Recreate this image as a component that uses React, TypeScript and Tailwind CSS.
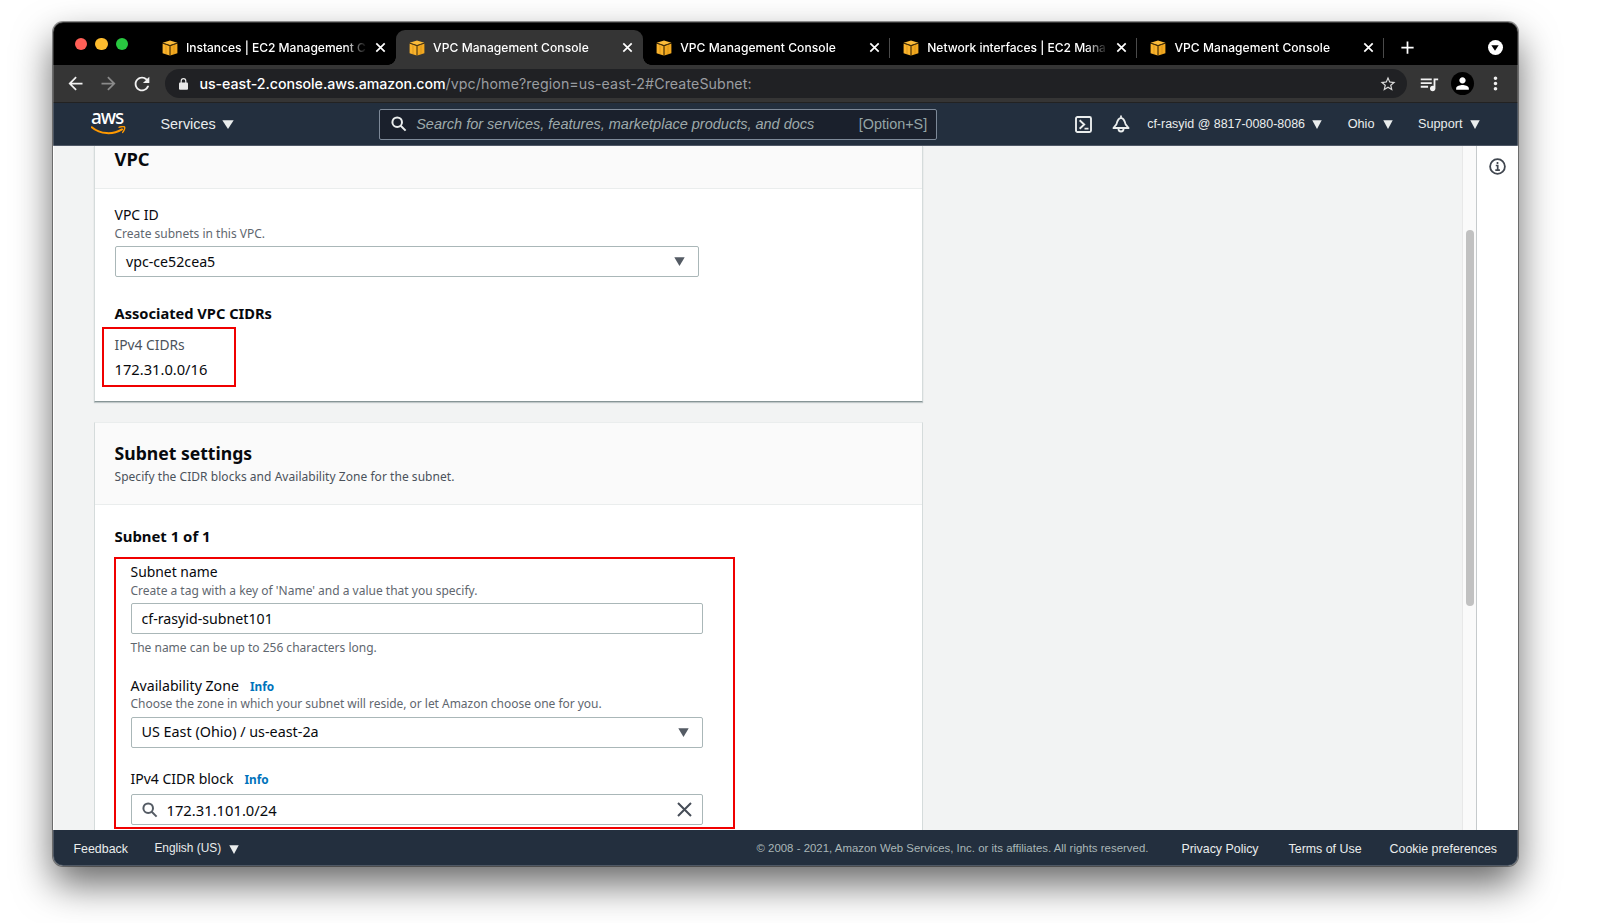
import React from "react";
import {
  MdAdd,
  MdArrowBack,
  MdArrowForward,
  MdMoreVert,
  MdPerson,
  MdQueueMusic,
  MdRefresh,
  MdStarBorder,
} from "react-icons/md";

const tabs = [
  { title: "Instances | EC2 Management C", spacing: "tracking-[-0.03px]" },
  { title: "VPC Management Console", active: true, spacing: "tracking-[0.06px]" },
  { title: "VPC Management Console", divider: true, spacing: "tracking-[0.06px]" },
  { title: "Network interfaces | EC2 Mana", divider: true, spacing: "tracking-[-0.03px]" },
  { title: "VPC Management Console", divider: true, spacing: "tracking-[0.06px]" },
];

function Cube() {
  return (
    <svg width="16" height="16" viewBox="0 0 16 16" className="shrink-0">
      <path d="M0.6 2.7 8 0.4l7.4 2.3L8 5.200z" fill="#fbbb3a" />
      <path d="M0.6 3.500 7.700 5.900v9.700L0.600 13.200z" fill="#fab32b" />
      <path d="M8.300 5.900l7.100-2.400v9.700L8.300 15.600z" fill="#f2a81f" />
      <path d="M0.600 3.100 8 5.500l7.400-2.400" stroke="#3d2a08" strokeWidth="0.8" fill="none" />
      <path d="M8 5.500v10.100" stroke="#6b4708" strokeWidth="0.9" fill="none" />
      <path d="M4 4.600v9.600M12 4.600v9.600" stroke="#c98a1a" strokeWidth="0.6" />
    </svg>
  );
}

function Caret({ className = "", w = 11 }: { className?: string; w?: number }) {
  return (
    <svg width={w} height="9" viewBox="0 0 11 9" preserveAspectRatio="none" className={"shrink-0 " + className}>
      <path d="M0.3 0.3h10.4L5.5 8.9z" fill="currentColor" />
    </svg>
  );
}

function Magnifier({ className = "" }: { className?: string }) {
  return (
    <svg width="16" height="16" viewBox="0 0 16 16" fill="none" stroke="currentColor" strokeWidth="2" className={"shrink-0 " + className}>
      <circle cx="6.2" cy="6.2" r="4.800" />
      <path d="M9.700 9.700l4.900 4.900" />
    </svg>
  );
}

function TabStrip() {
  return (
    <div className="flex h-[43px] bg-black">
      <div className="flex w-[96px] items-center gap-2 pt-[1px] pl-[21.5px]">
        <span className="size-[12.6px] rounded-full bg-[#ff5f57]" />
        <span className="size-[12.6px] rounded-full bg-[#febc2e]" />
        <span className="size-[12.6px] rounded-full bg-[#28c840]" />
      </div>
      {tabs.map((t, i) => (
        <div
          key={i}
          className={
            "relative mt-2 flex h-[35px] w-[247.1px] items-center pl-[13px] " +
            (t.active ? "rounded-t-[9px] bg-[#353535]" : "")
          }
        >
          {t.active && (
            <>
              <span className="absolute bottom-0 -left-2 size-2 bg-[radial-gradient(circle_at_0_0,#000_7.5px,#353535_8px)]" />
              <span className="absolute -right-2 bottom-0 size-2 bg-[radial-gradient(circle_at_100%_0,#000_7.5px,#353535_8px)]" />
            </>
          )}
          <Cube />
          <span
            className={
              "ml-2 w-[185px] text-[12.05px] leading-[18px] font-medium whitespace-nowrap text-white [mask-image:linear-gradient(to_right,#000_159px,transparent_181px)] " +
              t.spacing
            }
          >
            {t.title}
          </span>
          <svg width="11" height="11" viewBox="0 0 11 11" className="ml-[4px] shrink-0" stroke="#fff" strokeWidth="1.700">
            <path d="M1.300 1.300l8.400 8.400M9.700 1.300L1.300 9.700" />
          </svg>
          {t.divider && <span className="absolute top-2 right-0 h-5 w-px bg-[#4a4a4a]" />}
        </div>
      ))}
      <MdAdd className="mt-[15px] ml-[12.500px] size-[21px] text-white" />
      <span className="mt-[18px] ml-[70px] flex size-[15px] items-center justify-center rounded-full bg-white">
        <svg width="8" height="6" viewBox="0 0 8 6">
          <path d="M0.3 0.3h7.400L4 5.700z" fill="#000" />
        </svg>
      </span>
    </div>
  );
}

function Toolbar() {
  return (
    <div className="flex h-[38px] items-center border-b border-[#222] bg-[#353535] pl-3">
      <MdArrowBack className="size-[21px] text-[#f1f1f1]" />
      <MdArrowForward className="ml-3 size-[21px] text-[#8a8a8a]" />
      <MdRefresh className="ml-3 size-[22px] text-[#f1f1f1]" />
      <div className="ml-3 flex h-[29px] w-[1242px] items-center rounded-full bg-[#202124] pl-[14px] text-[14.2px] whitespace-nowrap">
        <svg width="9" height="12" viewBox="0 0 9 12">
          <rect x="0" y="4.500" width="9" height="7.300" rx="1" fill="#e8e8e8" />
          <path d="M2.200 5V3a2.300 2.300 0 014.600 0v2" fill="none" stroke="#e8e8e8" strokeWidth="1.200" />
        </svg>
        <span className="ml-[11.500px] font-medium tracking-[-0.04px] text-white">us-east-2.console.aws.amazon.com</span>
        <span className="tracking-[0.1px] text-[#9a9da1]">/vpc/home?region=us-east-2#CreateSubnet:</span>
        <MdStarBorder className="mr-[10px] ml-auto size-[18px] text-[#dadada]" />
      </div>
      <MdQueueMusic className="ml-[11px] size-[22px] text-[#f1f1f1]" />
      <span className="ml-[11px] flex size-[23px] items-center justify-center rounded-full bg-black">
        <MdPerson className="size-[19px] text-white" />
      </span>
      <MdMoreVert className="ml-[11px] size-[21px] text-[#f1f1f1]" />
    </div>
  );
}

function AwsNav() {
  return (
    <div className="flex h-[43px] items-center border-b border-[#4f5866] bg-[#232f3e] pl-[38px] font-['Liberation_Sans',sans-serif] whitespace-nowrap text-[#eaeded]">
      <div className="flex h-[27px] w-[35px] flex-col">
        <span className="font-['Noto_Sans',sans-serif] text-[19px] leading-[13px] font-medium tracking-[-1.1px] text-white">aws</span>
        <svg width="35" height="10" viewBox="0 0 35 10" className="mt-[2px]" fill="none">
          <path d="M0.8 1.2C9.5 8.600 22 8.800 31 3.400" stroke="#ff9900" strokeWidth="2" strokeLinecap="round" />
          <path d="M28 1.300c2-.7 5-.9 5.600-.3.5.8-.3 3.600-1.900 5.400" stroke="#ff9900" strokeWidth="1.400" strokeLinecap="round" />
        </svg>
      </div>
      <span className="ml-[34.500px] pt-[2px] text-[14.4px]">Services</span>
      <Caret className="ml-[6px]" w={12} />
      <div className="ml-[145.500px] flex h-[31px] w-[558px] items-center rounded-[2px] border border-[#7d8998] bg-[#1a202c] pr-[9px] pl-[11px] text-[#95a5a6]">
        <Magnifier className="text-[#eaeded]" />
        <span className="ml-[9px] pt-[2px] text-[14.5px] text-[#9eaaab] italic">
          Search for services, features, marketplace products, and docs
        </span>
        <span className="ml-auto pt-[2px] text-[14.4px]">[Option+S]</span>
      </div>
      <svg width="17" height="17" viewBox="0 0 17 17" className="ml-[138px]" fill="none" stroke="currentColor" strokeWidth="1.9">
        <rect x="1" y="1" width="15" height="15" rx="1.5" />
        <path d="M4.600 4.200l4.600 4.300-4.600 4.300M9.500 12.600h4" />
      </svg>
      <svg width="18" height="18" viewBox="0 0 18 18" className="ml-5" fill="none" stroke="currentColor" strokeWidth="1.8">
        <path d="M9 0.500v2.200M1.400 13h15.200l-3-3.600C12.800 6.200 12 3 9 3S5.200 6.200 4.400 9.400z" strokeLinejoin="round" />
        <path d="M6.400 13.500c0 4 5.200 4 5.200 0" />
      </svg>
      <span className="ml-[17px] w-[158px] pt-px text-[12.45px]">cf-rasyid @ 8817-0080-8086</span>
      <Caret className="ml-[7px]" w={10} />
      <span className="ml-[25.500px] pt-px text-[12.700px]">Ohio</span>
      <Caret className="ml-[8px]" w={10} />
      <span className="ml-[25.500px] pt-px text-[12.700px]">Support</span>
      <Caret className="ml-[7.500px]" w={10} />
    </div>
  );
}

function Hint({ children, className = "" }: { children: React.ReactNode; className?: string }) {
  return <p className={"text-[12px] leading-4 " + className}>{children}</p>;
}

function VpcCard() {
  return (
    <section className="h-[256px] w-[829px] border-x border-b border-[#d5dbdb] border-b-[#879596] bg-white shadow-[0_1px_1px_rgba(0,28,36,0.2)]">
      <header className="h-[43px] border-b border-[#eaeded] bg-[#fafafa] pl-5">
        <h2 className="text-[18.3px] leading-[25px] font-bold">VPC</h2>
      </header>
      <div className="pt-[16px] pl-5">
        <p className="text-[14px] leading-5">VPC ID</p>
        <Hint className="mt-px text-[#5f676f]">Create subnets in this VPC.</Hint>
        <div className="mt-[4px] flex h-[31px] w-[584px] items-center rounded-[2px] border border-[#aab7b8] pr-[13px] pl-[10.5px]">
          <span className="text-[14.2px]">vpc-ce52cea5</span>
          <Caret className="ml-auto text-[#545b64]" />
        </div>
        <h3 className="mt-[26px] text-[14.65px] leading-5 font-bold">Associated VPC CIDRs</h3>
        <div className="mt-[4px] -ml-[13px] h-[60px] w-[134px] border-2 border-[#f00000] pt-[5.5px] pl-[11px]">
          <p className="text-[13.8px] leading-5 text-[#4b525b]">IPv4 CIDRs</p>
          <p className="mt-[4.5px] text-[14.7px] leading-5">172.31.0.0/16</p>
        </div>
      </div>
    </section>
  );
}

function InfoLink() {
  return <a className="ml-[11px] text-[11.8px] font-bold text-[#0073bb]">Info</a>;
}

function SubnetCard() {
  return (
    <section className="mt-[20px] h-[420px] w-[829px] border-x border-t border-[#d5dbdb] border-t-[#eaeded] bg-white">
      <header className="h-[82px] border-b border-[#eaeded] bg-[#fafafa] pt-[18px] pl-5">
        <h2 className="text-[17.600px] leading-6 font-bold">Subnet settings</h2>
        <Hint className="mt-[4px] tracking-[0.04px] text-[#4b525b]">
          Specify the CIDR blocks and Availability Zone for the subnet.
        </Hint>
      </header>
      <div className="pt-[21px] pl-5">
        <h3 className="text-[14.9px] leading-5 font-bold">Subnet 1 of 1</h3>
        <div className="mt-[11px] -ml-px h-[272px] w-[621px] border-2 border-[#f00000] pt-[3px] pl-[15px]">
          <p className="text-[13.9px] leading-5">Subnet name</p>
          <Hint className="mt-px text-[#5f676f]">Create a tag with a key of 'Name' and a value that you specify.</Hint>
          <div className="mt-[4px] flex h-[31px] w-[572px] items-center rounded-[2px] border border-[#aab7b8] pl-[10px] text-[14.2px]">
            <span className="pt-px">cf-rasyid-subnet101</span>
          </div>
          <Hint className="mt-[6px] text-[#5f676f]">The name can be up to 256 characters long.</Hint>
          <p className="mt-[20px] text-[14.15px] leading-5">
            Availability Zone
            <InfoLink />
          </p>
          <Hint className="tracking-[-0.03px] text-[#5f676f]">
            Choose the zone in which your subnet will reside, or let Amazon choose one for you.
          </Hint>
          <div className="mt-[4.500px] flex h-[31px] w-[572px] items-center rounded-[2px] border border-[#aab7b8] pr-[13px] pl-[10px]">
            <span className="text-[14.35px]">US East (Ohio) / us-east-2a</span>
            <Caret className="ml-auto text-[#545b64]" />
          </div>
          <p className="mt-[21.500px] text-[14px] leading-5">
            IPv4 CIDR block
            <InfoLink />
          </p>
          <div className="mt-[5px] flex h-[31px] w-[572px] items-center rounded-[2px] border border-[#aab7b8] pr-[10px] pl-[10px]">
            <Magnifier className="text-[#545b64]" />
            <span className="ml-[9px] pt-px text-[14.75px]">172.31.101.0/24</span>
            <svg width="15" height="15" viewBox="0 0 15 15" className="ml-auto" stroke="#464d57" strokeWidth="2">
              <path d="M1 1l13 13M14 1L1 14" />
            </svg>
          </div>
        </div>
      </div>
    </section>
  );
}

function Content() {
  return (
    <div className="flex h-[684px] overflow-hidden border-l border-white bg-[#f2f3f3] font-['Noto_Sans',sans-serif] text-[#07090d]">
      <main className="w-[1408px] shrink-0 overflow-hidden pl-[39.5px]">
        <VpcCard />
        <SubnetCard />
      </main>
      <div className="w-[14px] shrink-0 border-l border-[#e8e8e8] bg-[#fafafa] pt-[84px] pl-[3px]">
        <div className="h-[376px] w-[8px] rounded-full bg-[#c1c1c1]" />
      </div>
      <aside className="flex flex-1 justify-center border-l border-[#c6cacc] bg-white pt-3">
        <svg width="17" height="17" viewBox="0 0 17 17" fill="none" stroke="#414750" strokeWidth="1.8">
          <circle cx="8.500" cy="8.500" r="7.400" />
          <path d="M8.500 3.900v2M6.800 7.500h1.900v4.400M6.300 12.200h4.600" strokeWidth="1.700" />
        </svg>
      </aside>
    </div>
  );
}

function Footer() {
  return (
    <footer className="flex h-[37px] items-center bg-[#232f3e] pt-px pr-[21px] pl-[20.5px] font-['Liberation_Sans',sans-serif] text-[12.4px] whitespace-nowrap text-[#eaeded]">
      <span>Feedback</span>
      <span className="ml-[26.500px] text-[11.9px]">English (US)</span>
      <Caret className="ml-[8px]" w={10} />
      <span className="ml-auto text-[11.4px] tracking-[0.02px] text-[#aab7b8]">
        © 2008 - 2021, Amazon Web Services, Inc. or its affiliates. All rights reserved.
      </span>
      <span className="ml-[33px]">Privacy Policy</span>
      <span className="ml-[30px]">Terms of Use</span>
      <span className="ml-[28px]">Cookie preferences</span>
    </footer>
  );
}

export default function App() {
  return (
    <div className="h-[923px] w-[1600px] overflow-hidden bg-white pt-[22px] pl-[53px] font-['Inter',sans-serif]">
      <div className="relative h-[844px] w-[1465px] rounded-[10px] shadow-[0_0_0_1px_rgba(0,0,0,0.4),0_18px_38px_rgba(0,0,0,0.6)]">
        <div className="h-full overflow-hidden rounded-[10px]">
          <TabStrip />
          <Toolbar />
          <AwsNav />
          <Content />
          <Footer />
        </div>
        <div className="pointer-events-none absolute inset-0 rounded-[10px] border border-white/20" />
      </div>
    </div>
  );
}
